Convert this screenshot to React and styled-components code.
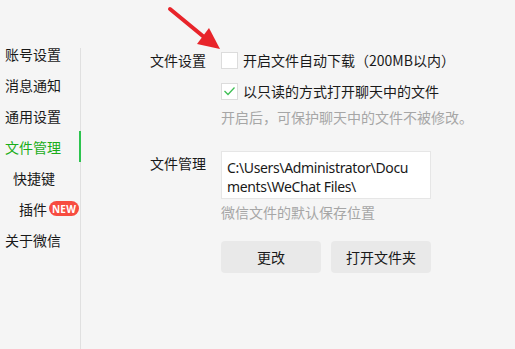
import React from 'react'
import styled, { createGlobalStyle } from 'styled-components'

const GlobalStyle = createGlobalStyle`
	html, body {
		margin: 0;
		padding: 0;
		background: #f5f5f5;
	}
	body {
		font-family: "Noto Sans CJK SC", "Noto Sans", sans-serif;
		font-size: 14px;
		color: #191919;
	}
`

const Page = styled.div`
	position: relative;
	display: flex;
	width: 515px;
	height: 349px;
	overflow: hidden;
	background: #f5f5f5;
`

const Nav = styled.div`
	position: relative;
	width: 81px;
	flex-shrink: 0;
	padding-top: 38px;
	box-sizing: border-box;
	&::before {
		content: '';
		position: absolute;
		top: 48px;
		bottom: 0;
		left: 80px;
		width: 1px;
		background: #e0e0e0;
	}
`

const NavItem = styled.div`
	position: relative;
	z-index: 1;
	display: flex;
	align-items: center;
	height: 31px;
	padding-left: ${props => props.indent || 5}px;
	box-sizing: border-box;
	font-size: 14px;
	white-space: nowrap;
	color: ${props => (props.active ? '#1aad19' : '#191919')};
	border-right: 2px solid ${props => (props.active ? '#2dc44f' : 'transparent')};
`

const Badge = styled.span`
	display: inline-flex;
	align-items: center;
	justify-content: center;
	margin-left: 2px;
	width: 30px;
	height: 15px;
	border-radius: 8px;
	background: #f74c40;
	color: #fff;
	font-family: "Open Sans", "Noto Sans", sans-serif;
	font-size: 10px;
	font-weight: 700;
	letter-spacing: 0.2px;
`

const Main = styled.div`
	flex: 1;
	padding: 50px 0 0 69px;
`

const Section = styled.div`
	display: grid;
	grid-template-columns: 71px 1fr;
	align-items: start;
	margin-bottom: ${props => props.gap || 0}px;
`

const Label = styled.div`
	line-height: 20px;
	padding-top: ${props => props.offset || 0}px;
	white-space: nowrap;
`

const Column = styled.div`
	display: flex;
	flex-direction: column;
`

const CheckRow = styled.label`
	display: flex;
	align-items: center;
	height: 20px;
	gap: 5px;
	margin-bottom: ${props => props.gap || 0}px;
	white-space: nowrap;
`

const Box = styled.span`
	display: inline-flex;
	align-items: center;
	justify-content: center;
	width: 17px;
	height: 17px;
	box-sizing: border-box;
	border: 1px solid #dcdcdc;
	background: #fff;
`

const Hint = styled.div`
	line-height: 20px;
	color: #a6a6a6;
	white-space: nowrap;
	margin-top: ${props => props.top || 0}px;
`

const PathBox = styled.div`
	width: 210px;
	height: 48px;
	box-sizing: border-box;
	padding: 7px 4px 0 5px;
	background: #fff;
	border: 1px solid #e6e6e6;
	line-height: 18.5px;
	font-family: "Noto Sans", sans-serif;
	font-size: 14px;
	letter-spacing: -0.35px;
	white-space: nowrap;
	overflow: hidden;
`

const ButtonRow = styled.div`
	display: flex;
	gap: 10px;
	margin-top: 19px;
`

const Button = styled.button`
	width: 100px;
	height: 32px;
	border: none;
	border-radius: 4px;
	background: #e9e9e9;
	color: #191919;
	font-family: "Noto Sans CJK SC", sans-serif;
	font-size: 14px;
	padding: 0;
`

const Arrow = styled.svg`
	position: absolute;
	left: 160px;
	top: 0;
	pointer-events: none;
`

const Check = () => (
	<svg width="13" height="10" viewBox="0 0 13 10">
		<polyline
			points="1.5,5 5,8.5 11.5,1.5"
			fill="none"
			stroke="#3fbf55"
			strokeWidth="1.3"
		/>
	</svg>
)

const navItems = [
	{ label: '账号设置' },
	{ label: '消息通知' },
	{ label: '通用设置' },
	{ label: '文件管理', active: true },
	{ label: '快捷键', indent: 13 },
	{ label: '插件', indent: 19, badge: 'NEW' },
	{ label: '关于微信' }
]

const App = () => {
	return (
		<Page>
			<GlobalStyle />
			<Nav>
				{navItems.map(item => (
					<NavItem key={item.label} active={item.active} indent={item.indent}>
						{item.label}
						{item.badge && <Badge>{item.badge}</Badge>}
					</NavItem>
				))}
			</Nav>
			<Main>
				<Section gap={24}>
					<Label>文件设置</Label>
					<Column>
						<CheckRow gap={11}>
							<Box />
							<span>开启文件自动下载（200MB以内）</span>
						</CheckRow>
						<CheckRow>
							<Box>
								<Check />
							</Box>
							<span>以只读的方式打开聊天中的文件</span>
						</CheckRow>
						<Hint top={6}>开启后，可保护聊天中的文件不被修改。</Hint>
					</Column>
				</Section>
				<Section>
					<Label offset={2}>文件管理</Label>
					<Column>
						<PathBox>
							C:\Users\Administrator\Docu
							<br />
							ments\WeChat Files\
						</PathBox>
						<Hint top={3}>微信文件的默认保存位置</Hint>
						<ButtonRow>
							<Button>更改</Button>
							<Button>打开文件夹</Button>
						</ButtonRow>
					</Column>
				</Section>
			</Main>
			<Arrow width="70" height="60" viewBox="0 0 70 60">
				<line x1="10" y1="9" x2="44" y2="37" stroke="#e8242a" strokeWidth="4" strokeLinecap="round" />
				<polygon points="60,49 37,44 49,28" fill="#e8242a" />
			</Arrow>
		</Page>
	)
}

export default App
